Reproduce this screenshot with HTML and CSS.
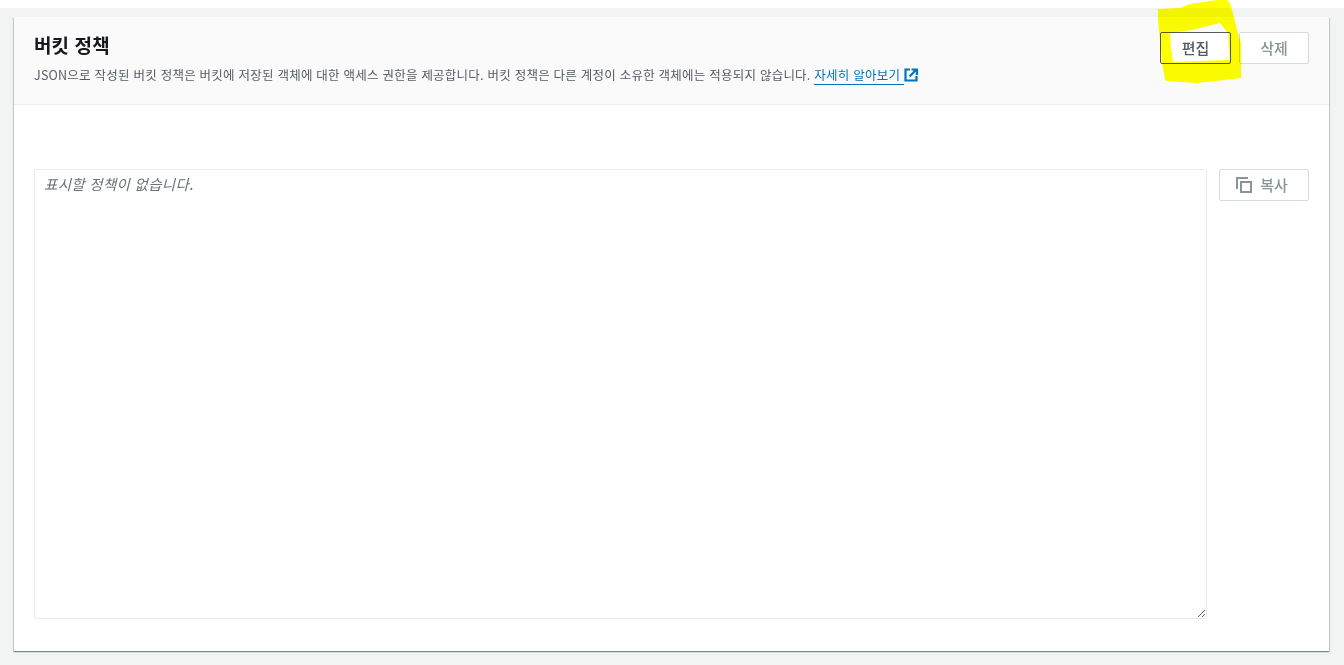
FILE: index.html
```html
<!DOCTYPE html>
<html lang="ko">
<head>
    <meta charset="UTF-8">
    <meta name="viewport" content="width=device-width, initial-scale=1.0">
    <title>버킷 정책</title>
    <link rel="stylesheet" href="styles.css">
</head>
<body>
<div class="page">
    <section class="card">
        <!-- Header -->
        <header class="card-header">
            <div class="heading">
                <h2>버킷 정책</h2>
                <p>JSON으로 작성된 버킷 정책은 버킷에 저장된 객체에 대한 액세스 권한을 제공합니다. 버킷 정책은 다른 계정이 소유한 객체에는 적용되지 않습니다. <a href="#"><span class="link-text">자세히 알아보기 </span><svg class="external" width="15" height="14" viewBox="0 0 15 14" aria-hidden="true"><path d="M6 1.500H1.500V12.500H12.500V8" fill="none" stroke="#0073bb" stroke-width="2.200"/><path d="M5.500 8.500L11.500 2.500M7.500 1.500H13V7" fill="none" stroke="#0073bb" stroke-width="2.200"/></svg></a></p>
            </div>
            <div class="actions">
                <button class="btn btn-edit" type="button">편집</button>
                <button class="btn btn-muted btn-delete" type="button">삭제</button>
            </div>
        </header>

        <!-- Policy body -->
        <div class="card-body">
            <textarea class="policy" placeholder="표시할 정책이 없습니다." disabled></textarea>
            <button class="btn btn-muted btn-copy" type="button">
                <svg width="16" height="16" viewBox="0 0 16 16" aria-hidden="true"><path d="M1 12V1H12" fill="none" stroke="#879596" stroke-width="2"/><rect x="5" y="5" width="10" height="10" fill="none" stroke="#879596" stroke-width="2"/></svg>
                복사
            </button>
        </div>
    </section>
</div>

<!-- Marker highlight drawn over the edit button -->
<svg class="marker" width="84" height="84" viewBox="1158 0 84 84" aria-hidden="true">
    <path fill="#ffff00" fill-rule="evenodd" d="M1158 9L1180 8L1190 4L1217 0L1227 0L1230 3L1234 17L1237 30L1241 43L1241 78L1215 81L1197 83L1167 81L1165 80L1162 63L1158 20ZM1170 33L1192 30L1220 23L1228 33L1230 60L1200 61L1173 62L1171 48Z"/>
</svg>
</body>
</html>
```

FILE: styles.css
```css
/* General Reset */
* {
    box-sizing: border-box;
}

body {
    margin: 0;
    height: 665px;
    overflow: hidden;
    background: #ffffff;
    font-family: "Noto Sans CJK KR", "Noto Sans", sans-serif;
    color: #16191f;
}

/* Page background starts under a thin white strip */
.page {
    margin-top: 8px;
    height: 657px;
    padding: 9px 15px 0 14px;
    background: #f2f3f3;
}

.card {
    height: 634px;
    background: #ffffff;
    box-shadow: 0 1px 1px 0 rgba(0, 28, 36, 0.3), 1px 1px 1px 0 rgba(0, 28, 36, 0.15), -1px 1px 1px 0 rgba(0, 28, 36, 0.15);
}

/* Header */
.card-header {
    display: flex;
    justify-content: space-between;
    height: 88px;
    padding: 15px 20px 0 20px;
    background: #fafafa;
    border-bottom: 1px solid #eaeded;
}

.heading h2 {
    margin: 0;
    font-size: 19px;
    line-height: 26px;
    font-weight: 700;
    letter-spacing: 0.1px;
}

.heading p {
    margin: 7px 0 0;
    font-size: 12.5px;
    line-height: 20px;
    letter-spacing: 0.23px;
    color: #545b64;
}

.heading a {
    color: #0073bb;
    text-decoration: none;
}

.link-text {
    border-bottom: 1px solid #0073bb;
}

.external {
    vertical-align: -2px;
}

.actions {
    display: flex;
    gap: 8px;
}

/* Buttons */
.btn {
    height: 32px;
    padding: 0 0 2px;
    background: #ffffff;
    border: 1px solid #545b64;
    border-radius: 2px;
    font-family: inherit;
    font-size: 15px;
    font-weight: 500;
    color: #545b64;
    cursor: pointer;
}

.btn-edit {
    width: 71px;
}

.btn-muted {
    border-color: #d5dbdb;
    color: #879596;
}

.btn-delete {
    width: 70px;
}

.btn-copy {
    display: flex;
    align-items: center;
    justify-content: center;
    gap: 8px;
    flex: none;
    width: 90px;
    padding-right: 4px;
}

.btn-copy svg {
    margin-top: 2px;
}

/* Body */
.card-body {
    display: flex;
    gap: 12px;
    padding: 64px 20px 32px 20px;
    height: 546px;
}

.policy {
    flex: 1;
    height: 450px;
    padding: 5px 9px;
    background: #ffffff;
    border: 1px solid #eaeded;
    border-radius: 2px;
    font-family: inherit;
    font-size: 14.5px;
    line-height: 18px;
    letter-spacing: 0.3px;
    resize: vertical;
}

.policy::placeholder {
    color: #687078;
    font-style: italic;
    opacity: 1;
}

/* Yellow marker stroke, multiplied so the button border shows through */
.marker {
    position: absolute;
    left: 1158px;
    top: 0;
    mix-blend-mode: multiply;
}
```
